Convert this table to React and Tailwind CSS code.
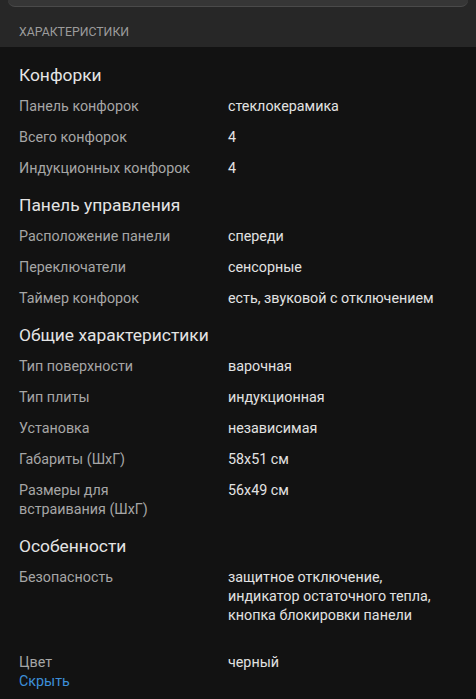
import React from 'react';

const sections = [
  {
    title: 'Конфорки',
    rows: [
      ['Панель конфорок', 'стеклокерамика'],
      ['Всего конфорок', '4'],
      ['Индукционных конфорок', '4'],
    ],
  },
  {
    title: 'Панель управления',
    rows: [
      ['Расположение панели', 'спереди'],
      ['Переключатели', 'сенсорные'],
      ['Таймер конфорок', 'есть, звуковой с отключением'],
    ],
  },
  {
    title: 'Общие характеристики',
    rows: [
      ['Тип поверхности', 'варочная'],
      ['Тип плиты', 'индукционная'],
      ['Установка', 'независимая'],
      ['Габариты (ШхГ)', '58x51 см'],
      [['Размеры для', 'встраивания (ШхГ)'], '56x49 см'],
    ],
  },
];

function Lines({ value }) {
  if (!Array.isArray(value)) return value;
  return value.map((line, i) => (
    <React.Fragment key={i}>
      {i > 0 && <br />}
      {line}
    </React.Fragment>
  ));
}

function Row({ label, value, last }) {
  return (
    <div className={`flex ${last ? '' : 'mb-3'}`}>
      <div className="w-[209px] shrink-0 text-[#a6a6a6]">
        <Lines value={label} />
      </div>
      <div className="flex-1 text-[#e2e2e2]">
        <Lines value={value} />
      </div>
    </div>
  );
}

export default function App() {
  return (
    <div
      className="w-[476px] h-[699px] overflow-hidden bg-[#121212]"
      style={{ fontFamily: 'Roboto, "Noto Sans", sans-serif' }}
    >
      {/* Header strip */}
      <div className="bg-[#272727] h-[47px]">
        <div className="mx-2 h-[7px] rounded-b-[12px] bg-[#363636] border-b border-[#4a4a4a]" />
        <div className="pl-[19px] pt-[18px] text-[12.3px] leading-[14px] text-[#9c9c9c] uppercase">
          Характеристики
        </div>
      </div>

      <div className="px-[19px] pt-[16px] text-[14.3px] leading-[19px]">
        {sections.map((s) => (
          <div key={s.title} className="mb-[15px]">
            <div className="text-[17.4px] leading-[24px] text-[#e4e4e4] mb-[10px]">{s.title}</div>
            {s.rows.map(([l, v]) => (
              <Row key={Array.isArray(l) ? l.join(' ') : l} label={l} value={v} />
            ))}
          </div>
        ))}

        <div>
          <div className="text-[17.4px] leading-[24px] text-[#e4e4e4] mb-[10px]">Особенности</div>
          <div className="flex mb-[28px]">
            <div className="w-[209px] shrink-0 text-[#a6a6a6]">Безопасность</div>
            <div className="flex-1 text-[#e2e2e2]">
              защитное отключение,
              <br />
              индикатор остаточного тепла,
              <br />
              кнопка блокировки панели
            </div>
          </div>
          <Row label="Цвет" value="черный" last />
          <div className="text-[#3d8fd8]">Скрыть</div>
        </div>
      </div>
    </div>
  );
}
